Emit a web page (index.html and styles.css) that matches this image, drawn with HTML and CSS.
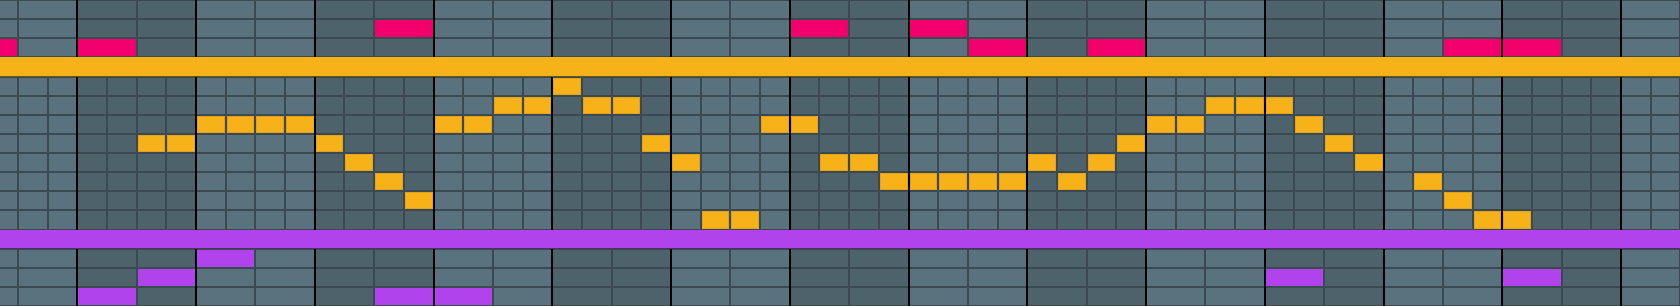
FILE: index.html
```html
<!DOCTYPE html>
<html lang="en">
<head>
<meta charset="utf-8">
<title>Sequencer</title>
<link rel="stylesheet" href="styles.css">
</head>
<body>
<div class="seq">
  <div class="track">
    <div class="lane lane-top" id="lane-top"></div>
    <div class="band band-yellow"></div>
    <div class="lane lane-mid" id="lane-mid"></div>
    <div class="band band-purple"></div>
    <div class="lane lane-bot" id="lane-bot"></div>
  </div>
</div>
<script src="script.js"></script>
</body>
</html>
```

FILE: styles.css
```css
html, body {
  margin: 0;
  padding: 0;
  background: #3b4a52;
  overflow: hidden;
}

.seq {
  width: 1680px;
  height: 306px;
  overflow: hidden;
}

.track {
  width: 1781.25px;
  margin-left: -41.5px;
  height: 306px;
  display: flex;
  flex-direction: column;
}

.lane {
  display: flex;
  flex: none;
}

.lane-top,
.lane-bot {
  height: 57.375px;
}

.lane-mid {
  height: 153px;
}

.band {
  flex: none;
  height: 19.125px;
  box-sizing: border-box;
}

.band-yellow {
  background: #f7b21a;
  border-bottom: 1px solid #6a5418;
}

.band-purple {
  background: #b043eb;
  border-bottom: 1px solid #4e2f64;
}

.measure {
  flex: none;
  width: 118.75px;
  box-sizing: border-box;
  border-left: 1px solid #000;
  border-right: 1px solid #000;
  padding: 1px 0;
  background: #3b4a52;
  display: grid;
  gap: 2px;
}

.measure-2 {
  grid-template-columns: repeat(2, 1fr);
  grid-template-rows: repeat(3, 1fr);
}

.measure-4 {
  grid-template-columns: repeat(4, 1fr);
  grid-template-rows: repeat(8, 1fr);
}

.cell {
  background: #5a717e;
}

.measure.dark .cell {
  background: #4e626b;
}

.measure .cell.pink {
  background: #f2006c;
}

.measure .cell.yellow {
  background: #f7b21a;
  box-shadow: inset 0 0 0 1px rgba(90, 60, 0, 0.12);
}

.measure .cell.purple {
  background: #b043eb;
}
```

FILE: script.js
```js
(function () {
  var MEASURES = 15;

  var topNotes = [[0,2],[2,2],[7,1],[14,1],[16,1],[17,2],[19,2],[25,2],[26,2]];
  var botNotes = [[4,0],[3,1],[2,2],[7,2],[8,2],[22,1],[26,1]];
  var midNotes = [];
  function addMid(from, to, row) {
    for (var j = from; j <= to; j++) midNotes.push([j, row]);
  }
  addMid(6, 7, 3); addMid(8, 11, 2); addMid(12, 12, 3); addMid(13, 13, 4);
  addMid(14, 14, 5); addMid(15, 15, 6); addMid(16, 17, 2); addMid(18, 19, 1);
  addMid(20, 20, 0); addMid(21, 22, 1); addMid(23, 23, 3); addMid(24, 24, 4);
  addMid(25, 26, 7); addMid(27, 28, 2); addMid(29, 30, 4); addMid(31, 35, 5);
  addMid(36, 36, 4); addMid(37, 37, 5); addMid(38, 38, 4); addMid(39, 39, 3);
  addMid(40, 41, 2); addMid(42, 44, 1); addMid(45, 45, 2); addMid(46, 46, 3);
  addMid(47, 47, 4); addMid(49, 49, 5); addMid(50, 50, 6); addMid(51, 52, 7);

  function toSet(list) {
    var s = {};
    list.forEach(function (n) { s[n[0] + ':' + n[1]] = true; });
    return s;
  }

  function build(id, cols, rows, notes, cls) {
    var lane = document.getElementById(id);
    var set = toSet(notes);
    for (var m = 0; m < MEASURES; m++) {
      var meas = document.createElement('div');
      meas.className = 'measure measure-' + cols + (m % 2 ? ' dark' : '');
      for (var r = 0; r < rows; r++) {
        for (var c = 0; c < cols; c++) {
          var cell = document.createElement('div');
          var step = m * cols + c;
          cell.className = 'cell' + (set[step + ':' + r] ? ' ' + cls : '');
          meas.appendChild(cell);
        }
      }
      lane.appendChild(meas);
    }
  }

  build('lane-top', 2, 3, topNotes, 'pink');
  build('lane-mid', 4, 8, midNotes, 'yellow');
  build('lane-bot', 2, 3, botNotes, 'purple');
})();
```
